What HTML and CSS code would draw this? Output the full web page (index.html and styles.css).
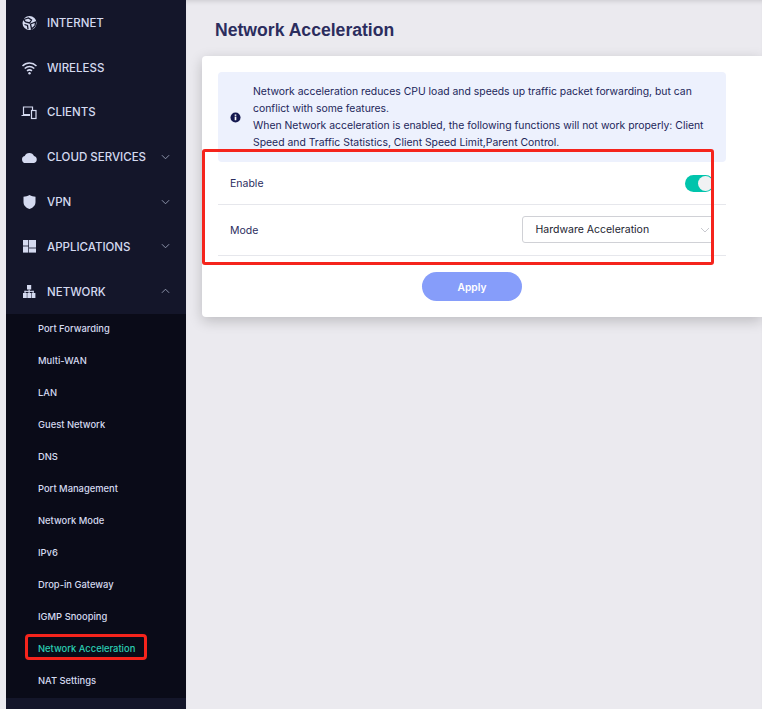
FILE: index.html
```html
<!DOCTYPE html>
<html lang="en">
<head>
<meta charset="utf-8">
<title>Network Acceleration</title>
<link rel="stylesheet" href="styles.css">
</head>
<body>
<div class="page">
  <aside class="sidebar">
    <nav class="menu">
      <div class="item">
        <svg class="icon" viewBox="0 0 16 16"><circle cx="8.500" cy="8" r="7" fill="#d5daf0"/><path d="M2.500 4.500 7.500 3l3 2-2 3-4-1zM9.500 9l5-2-.5 4-3.500 3zM3.500 9.500l3 1 .5 3.500" fill="none" stroke="#14162a" stroke-width="1.300"/></svg>
        <span class="label">INTERNET</span>
      </div>
      <div class="item">
        <svg class="icon" viewBox="0 0 16 16" fill="none" stroke="#d5daf0" stroke-width="1.500"><path d="M1.500 6c4-4 10-4 14 0M3.700 8.500c3-2.600 6.600-2.600 9.600 0M6 10.800c1.600-1.200 3.400-1.200 5 0"/><circle cx="8.500" cy="13.300" r="1.200" fill="#d5daf0" stroke="none"/></svg>
        <span class="label">WIRELESS</span>
      </div>
      <div class="item">
        <svg class="icon" viewBox="0 0 16 16" fill="none" stroke="#d5daf0" stroke-width="1.200"><path d="M9 10.500H2.500V3h9v3M.5 11.500H9"/><rect x="10.500" y="6.500" width="4.500" height="8"/></svg>
        <span class="label">CLIENTS</span>
      </div>
      <div class="item">
        <svg class="icon" viewBox="0 0 16 16"><path d="M4.500 14a3.500 3.500 0 0 1-.8-6.900A5 5 0 0 1 13 7 3.600 3.600 0 0 1 13 14z" fill="#d5daf0"/></svg>
        <span class="label">CLOUD SERVICES</span>
        <svg class="chev" viewBox="0 0 10 6"><path d="M1 1l4 4 4-4" fill="none" stroke="#9aa0b8" stroke-width="1"/></svg>
      </div>
      <div class="item">
        <svg class="icon" viewBox="0 0 16 16"><path d="M8.500 1c2 1.200 4 1.600 6 1.700V8c0 3.500-2.500 5.800-6 7-3.500-1.200-6-3.500-6-7V2.700C4.500 2.600 6.500 2.200 8.500 1z" fill="#d5daf0"/></svg>
        <span class="label">VPN</span>
        <svg class="chev" viewBox="0 0 10 6"><path d="M1 1l4 4 4-4" fill="none" stroke="#9aa0b8" stroke-width="1"/></svg>
      </div>
      <div class="item">
        <svg class="icon" viewBox="0 0 16 16" fill="#d5daf0"><rect x="2" y="1" width="5.300" height="5.600"/><rect x="2" y="7.400" width="5.300" height="6.200"/><rect x="8" y="1" width="7" height="7.600"/><rect x="8" y="9.400" width="7" height="4.200"/></svg>
        <span class="label">APPLICATIONS</span>
        <svg class="chev" viewBox="0 0 10 6"><path d="M1 1l4 4 4-4" fill="none" stroke="#9aa0b8" stroke-width="1"/></svg>
      </div>
      <div class="item">
        <svg class="icon" viewBox="0 0 16 16" fill="#d5daf0"><rect x="6" y="1" width="4.200" height="4.500"/><rect x="7.500" y="5.500" width="1.200" height="3.500"/><rect x="3.500" y="6.800" width="9.200" height="1.100"/><rect x="3.500" y="6.800" width="1.100" height="2.200"/><rect x="11.600" y="6.800" width="1.100" height="2.200"/><rect x="2" y="9" width="3.800" height="5"/><rect x="6.300" y="9" width="3.800" height="5"/><rect x="10.600" y="9" width="3.800" height="5"/></svg>
        <span class="label">NETWORK</span>
        <svg class="chev" viewBox="0 0 10 6"><path d="M1 5l4-4 4 4" fill="none" stroke="#9aa0b8" stroke-width="1"/></svg>
      </div>
    </nav>
    <ul class="submenu">
      <li>Port Forwarding</li>
      <li>Multi-WAN</li>
      <li>LAN</li>
      <li>Guest Network</li>
      <li>DNS</li>
      <li>Port Management</li>
      <li>Network Mode</li>
      <li>IPv6</li>
      <li>Drop-in Gateway</li>
      <li>IGMP Snooping</li>
      <li class="current">Network Acceleration</li>
      <li>NAT Settings</li>
    </ul>
  </aside>
  <main class="main">
    <h1 class="title">Network Acceleration</h1>
    <section class="card">
      <div class="notice">
        <svg class="notice-icon" viewBox="0 0 12 12"><circle cx="6" cy="6" r="5.500" fill="#14184f"/><rect x="5.100" y="5" width="1.800" height="4" fill="#fff"/><rect x="5.100" y="2.700" width="1.800" height="1.500" fill="#fff"/></svg>
        <p class="notice-text">Network acceleration reduces CPU load and speeds up traffic packet forwarding, but can conflict with some features.<br>When Network acceleration is enabled, the following functions will not work properly: Client Speed and Traffic Statistics, Client Speed Limit,Parent Control.</p>
      </div>
      <div class="row row-enable">
        <span class="row-label">Enable</span>
        <span class="toggle"><span class="knob"></span></span>
      </div>
      <div class="row row-mode">
        <span class="row-label">Mode</span>
        <div class="select">
          <span>Hardware Acceleration</span>
          <svg class="select-chev" viewBox="0 0 10 6"><path d="M1 1l4 4 4-4" fill="none" stroke="#c8c9cf" stroke-width="1"/></svg>
        </div>
      </div>
      <div class="actions"><button class="apply">Apply</button></div>
    </section>
  </main>
</div>
<div class="mark mark-form"></div>
<div class="mark mark-nav"></div>
</body>
</html>
```
FILE: styles.css
```css
* { box-sizing: border-box; }
html, body { margin: 0; padding: 0; height: 100%; overflow: hidden; }
body { background: #ebeaef; font-family: Inter, "Liberation Sans", sans-serif; position: relative; }
.page { display: flex; height: 709px; padding-left: 6px; }
.sidebar { width: 180px; flex: none; background: #14162a; display: flex; flex-direction: column; }
.item { height: 44.8px; flex: none; display: flex; align-items: center; padding: 1px 0 0 15px; color: #d5daf0; font-size: 11.5px; font-weight: 500; }
.icon { width: 16px; height: 16px; flex: none; margin-right: 10px; }
.label { flex: 1; white-space: nowrap; }
.chev { width: 9px; height: 6px; flex: none; margin: -1px 16px 0 0; }
.submenu { list-style: none; margin: 0; padding: 0; background: #0a0b18; }
.submenu li { height: 32px; padding: 0 0 3px 32px; display: flex; align-items: center; font-size: 9.4px; font-weight: 500; color: #d5daf0; }
.submenu .current { color: #2bcfb4; }
.main { flex: 1; min-width: 0; position: relative; padding: 19px 0 0 16px; box-shadow: inset 0 4px 5px -3px rgba(0,0,0,.15); }
.title { margin: 0 0 14px 13px; font-family: "Liberation Sans", sans-serif; font-size: 17.6px; line-height: 23px; font-weight: 700; color: #2b2d5e; }
.card { background: #fff; height: 261px; border-radius: 4px 0 0 4px; padding: 16px 36px 0 16px; box-shadow: 0 4px 14px rgba(0,0,0,.2); }
.notice { height: 90px; background: #edf1fd; border-radius: 4px; display: flex; align-items: center; padding-left: 12px; }
.notice-icon { width: 11px; height: 11px; flex: none; margin-right: 12px; }
.notice-text { margin: 0; flex: 1; font-size: 10.4px; line-height: 17px; color: #22265a; padding-right: 14px; }
.row { display: flex; align-items: center; justify-content: space-between; padding-left: 12px; border-bottom: 1px solid #e6e7ec; font-size: 10.5px; color: #2b2d5e; }
.row-enable { height: 43px; }
.row-mode { height: 51px; }
.toggle { width: 29px; height: 17px; border-radius: 9px; background: #00c4ac; position: relative; margin-right: 12px; }
.knob { position: absolute; right: 1px; top: 1px; width: 15px; height: 15px; border-radius: 50%; background: #f0f1f3; }
.select { width: 192px; height: 27px; margin: 0 12px 2px 0; border: 1px solid #d0d1d6; border-radius: 3px; display: flex; align-items: center; justify-content: space-between; padding: 1px 3px 0 12.5px; color: #1c1d30; }
.select-chev { width: 10px; height: 6px; }
.actions { display: flex; justify-content: center; padding-top: 16px; }
.apply { width: 100px; height: 29px; border: 0; border-radius: 15px; background: #869dfa; color: #fff; font: 600 10.2px Inter, sans-serif; }
.mark { position: absolute; border: 3px solid #f5241c; border-radius: 3px; }
.mark-form { left: 202px; top: 149px; width: 512px; height: 116px; }
.mark-nav { left: 25px; top: 634px; width: 122px; height: 26px; border-radius: 4px; }
```
